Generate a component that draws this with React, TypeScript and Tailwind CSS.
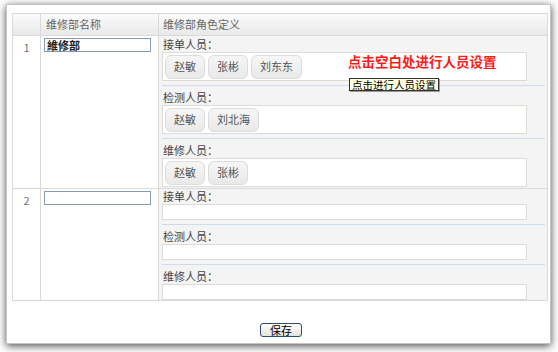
import React from 'react';

type Group = { label: string; people: string[] };

const row1: Group[] = [
  { label: '接单人员：', people: ['赵敏', '张彬', '刘东东'] },
  { label: '检测人员：', people: ['赵敏', '刘北海'] },
  { label: '维修人员：', people: ['赵敏', '张彬'] },
];

const row2: Group[] = [
  { label: '接单人员：', people: [] },
  { label: '检测人员：', people: [] },
  { label: '维修人员：', people: [] },
];

const font = { fontFamily: '"Noto Sans CJK SC", "Noto Sans", sans-serif' };

function Chip({ name }: { name: string }) {
  return (
    <div className="h-[24px] px-[8px] flex items-center rounded-[6px] border border-[#dcdcdc] bg-gradient-to-b from-[#f6f6f6] to-[#e9e9e9] text-[11px] text-[#555]">
      {name}
    </div>
  );
}

function RoleGroups({ groups, filled }: { groups: Group[]; filled: boolean }) {
  return (
    <div className="flex flex-col">
      {groups.map((g, i) => (
        <div key={g.label} className="flex flex-col">
          {i > 0 && <div className="h-px bg-[#cddaf0] mt-[4px] mb-[4px] mr-[2px]" />}
          <div className="h-[15px] leading-[15px] text-[11px] text-[#444] pl-[1px]">{g.label}</div>
          {filled ? (
            <div className="relative w-[365px] h-[29px] border border-[#dedbd4] bg-white flex items-center gap-[3px] pl-[2px]">
              {g.people.map(p => (
                <Chip key={p} name={p} />
              ))}
              {i === 0 && (
                <>
                  <span className="absolute left-[185px] top-[-2px] text-[13.5px] font-bold text-[#ff1a1a] whitespace-nowrap">
                    点击空白处进行人员设置
                  </span>
                  <span className="absolute left-[186px] top-[25px] z-10 h-[13px] px-[2px] leading-[11px] text-[10.5px] text-black bg-[#ffffe1] border border-[#333] shadow-[1px_1px_0_#999] whitespace-nowrap">
                    点击进行人员设置
                  </span>
                </>
              )}
            </div>
          ) : (
            <div className="w-[365px] h-[16px] border border-[#dedbd4] bg-white" />
          )}
        </div>
      ))}
    </div>
  );
}

function NameInput({ value }: { value: string }) {
  return (
    <div className="w-[107px] h-[14px] border border-[#7f9db9] bg-white text-[11px] leading-[12px] font-bold text-[#222] pl-[2px]">
      {value}
    </div>
  );
}

export default function App() {
  return (
    <div className="w-[558px] h-[352px] bg-white overflow-hidden" style={font}>
      <div className="ml-[6px] mt-[4px] w-[545px] h-[340px] bg-white border border-[#c4c4c4] shadow-[0_2px_8px_rgba(0,0,0,0.7)] flex flex-col pt-[8px] pl-[5px]">
        <table className="border-collapse w-[536px] table-fixed">
          <colgroup>
            <col className="w-[28px]" />
            <col className="w-[118px]" />
            <col />
          </colgroup>
          <thead>
            <tr className="h-[22px] bg-gradient-to-b from-[#fbfbfb] to-[#e8e8e8]">
              <th className="border border-[#d9d9d9]" />
              <th className="border border-[#d9d9d9] text-left font-normal text-[11px] text-[#666] pl-[5px]">维修部名称</th>
              <th className="border border-[#d9d9d9] text-left font-normal text-[11px] text-[#666] pl-[4px]">维修部角色定义</th>
            </tr>
          </thead>
          <tbody>
            <tr>
              <td className="border border-[#d9d9d9] align-top text-center text-[11px] text-[#777] pt-[3px]">1</td>
              <td className="border border-[#d9d9d9] align-top pl-[3px] pt-[2px]">
                <NameInput value="維修部" />
              </td>
              <td className="border border-[#d9d9d9] align-top bg-[#f4f4f4] pl-[3px] pt-[1px] pb-[1px]">
                <RoleGroups groups={row1} filled />
              </td>
            </tr>
            <tr>
              <td className="border border-[#d9d9d9] align-top text-center text-[11px] text-[#777] pt-[3px]">2</td>
              <td className="border border-[#d9d9d9] align-top pl-[3px] pt-[2px]">
                <NameInput value="" />
              </td>
              <td className="border border-[#d9d9d9] align-top bg-[#f4f4f4] pl-[3px]">
                <RoleGroups groups={row2} filled={false} />
              </td>
            </tr>
          </tbody>
        </table>
        <div className="flex justify-center mt-[22px]">
          <button className="w-[42px] h-[14px] rounded-[3px] border border-[#2c4d7a] bg-gradient-to-b from-white to-[#e4e2da] text-[11px] leading-[12px] text-black">
            保存
          </button>
        </div>
      </div>
    </div>
  );
}
